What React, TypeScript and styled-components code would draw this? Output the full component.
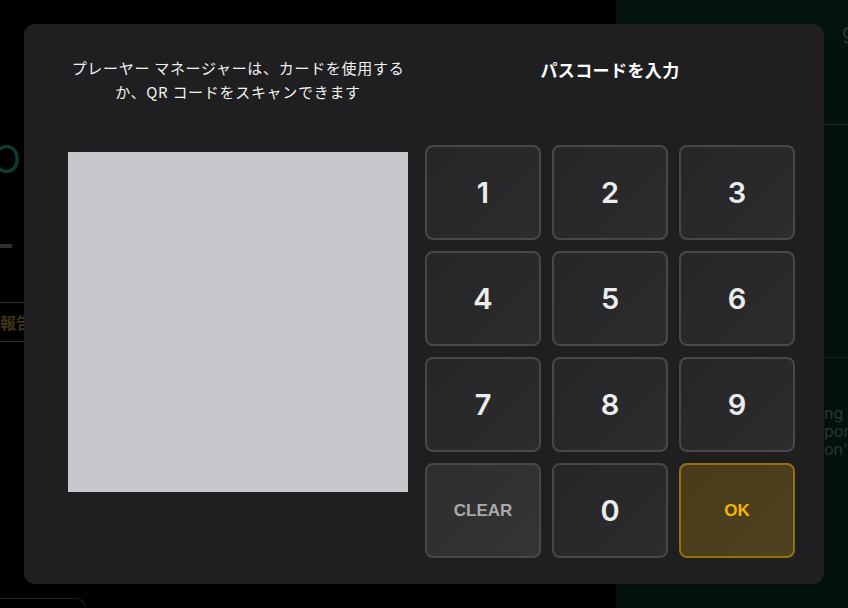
import React from "react";
import styled, { createGlobalStyle } from "styled-components";

const Global = createGlobalStyle`
  html, body { margin: 0; padding: 0; background: #000; }
  body { width: 848px; height: 608px; overflow: hidden; font-family: "Noto Sans CJK JP", "Noto Sans", sans-serif; }
  * { box-sizing: border-box; }
`;

const Page = styled.div`
  width: 848px;
  height: 608px;
  display: grid;
  grid-template-columns: 616px 1fr;
  background: #000;
  position: relative;
  overflow: hidden;
`;

const LeftPane = styled.div`
  display: flex;
  flex-direction: column;
  padding-top: 140px;
  color: #0f3a33;
  font-family: "Inter", sans-serif;
`;

const GhostO = styled.div`
  font-size: 38px;
  line-height: 38px;
  margin-left: -8px;
  color: #0f3a33;
`;

const GhostBar = styled.div`
  width: 12px;
  height: 4px;
  background: #2e2e2e;
  margin-top: 66px;
`;

const GhostTag = styled.div`
  margin-top: 54px;
  width: 40px;
  height: 40px;
  border-top: 1px solid #3a2f14;
  border-bottom: 1px solid #3a2f14;
  display: flex;
  align-items: center;
  font-family: "Noto Sans CJK JP", sans-serif;
  font-weight: 700;
  font-size: 16px;
  color: #3f3418;
`;

const GhostPill = styled.div`
  margin-top: auto;
  width: 90px;
  height: 10px;
  border: 1.5px solid #0c2824;
  border-bottom: none;
  border-radius: 0 18px 0 0;
  margin-left: -4px;
`;

const RightPane = styled.div`
  background: linear-gradient(180deg, #03130f 0%, #02100d 100%);
  display: flex;
  flex-direction: column;
  font-family: "Inter", sans-serif;
  color: #2b3633;
`;

const GhostHead = styled.div`
  height: 125px;
  padding: 18px 0 0 226px;
  font-size: 22px;
  border-bottom: 1px solid #1e2c29;
`;

const GhostRow = styled.div`
  height: 233px;
  border-bottom: 1px solid #15221f;
`;

const GhostText = styled.div`
  padding: 46px 0 0 208px;
  font-size: 16px;
  line-height: 18px;
  white-space: nowrap;
`;

const Modal = styled.div`
  position: absolute;
  left: 24px;
  top: 24px;
  width: 800px;
  height: 560px;
  background: #1f1f21;
  border-radius: 11px;
  padding: 32px 29px 26px 44px;
  display: grid;
  grid-template-columns: 340px 370px;
  column-gap: 17px;
`;

const Column = styled.div`
  display: flex;
  flex-direction: column;
`;

const Hint = styled.p`
  margin: 0;
  color: #f2f2f2;
  font-size: 15px;
  line-height: 24px;
  text-align: center;
  letter-spacing: 0.7px;
  white-space: nowrap;
`;

const Scanner = styled.div`
  margin-top: 48px;
  width: 340px;
  height: 340px;
  background: #c8c7cb;
`;

const Title = styled.h2`
  margin: 2px 0 0;
  height: 24px;
  color: #ffffff;
  font-size: 17px;
  line-height: 24px;
  font-weight: 700;
  text-align: center;
  letter-spacing: 0.4px;
`;

const Keypad = styled.div`
  margin-top: 63px;
  display: grid;
  grid-template-columns: repeat(3, 116px);
  grid-auto-rows: 95px;
  gap: 11px;
`;

type Variant = "digit" | "clear" | "ok";

const Key = styled.button<{ $variant: Variant }>`
  border-radius: 8px;
  border: 2px solid
    ${(p) => (p.$variant === "ok" ? "#94710f" : "#48484a")};
  background: ${(p) =>
    p.$variant === "ok"
      ? "linear-gradient(135deg, #493b1a, #4e411f)"
      : p.$variant === "clear"
      ? "linear-gradient(135deg, #2e2e30, #343436)"
      : "linear-gradient(135deg, #262628, #2c2c2e)"};
  color: ${(p) =>
    p.$variant === "ok" ? "#f7b500" : p.$variant === "clear" ? "#a9a9ab" : "#ececec"};
  font-family: ${(p) =>
    p.$variant === "digit" ? `"Inter", sans-serif` : `"Liberation Sans", Arial, sans-serif`};
  font-size: ${(p) => (p.$variant === "digit" ? "29px" : "17px")};
  font-weight: ${(p) => (p.$variant === "digit" ? 600 : 700)};
  display: flex;
  align-items: center;
  justify-content: center;
  padding: 0;
  cursor: pointer;
`;

const keys: { label: string; variant: Variant }[] = [
  ...["1", "2", "3", "4", "5", "6", "7", "8", "9"].map((l) => ({ label: l, variant: "digit" as Variant })),
  { label: "CLEAR", variant: "clear" },
  { label: "0", variant: "digit" },
  { label: "OK", variant: "ok" },
];

export default function App() {
  return (
    <>
      <Global />
      <Page>
        <LeftPane>
          <GhostO>O</GhostO>
          <GhostBar />
          <GhostTag>報告</GhostTag>
          <GhostPill />
        </LeftPane>
        <RightPane>
          <GhostHead>g</GhostHead>
          <GhostRow />
          <GhostText>
            ng<br />por<br />on't
          </GhostText>
        </RightPane>
        <Modal>
          <Column>
            <Hint>
              プレーヤー マネージャーは、カードを使用する
              <br />
              か、QR コードをスキャンできます
            </Hint>
            <Scanner />
          </Column>
          <Column>
            <Title>パスコードを入力</Title>
            <Keypad>
              {keys.map((k) => (
                <Key key={k.label} $variant={k.variant}>
                  {k.label}
                </Key>
              ))}
            </Keypad>
          </Column>
        </Modal>
      </Page>
    </>
  );
}
